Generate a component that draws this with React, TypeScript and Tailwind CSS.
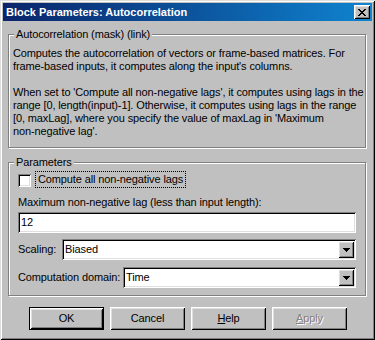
import React from "react";

const raised =
  "shadow-[inset_1px_1px_0_#fff,inset_-1px_-1px_0_#000,inset_2px_2px_0_#dfdfdf,inset_-2px_-2px_0_#808080]";
const sunken =
  "shadow-[inset_1px_1px_0_#808080,inset_-1px_-1px_0_#fff,inset_2px_2px_0_#000,inset_-2px_-2px_0_#dfdfdf]";

function CloseGlyph() {
  const rows = ["XX....XX", ".XX..XX.", "..XXXX..", "...XX...", "..XXXX..", ".XX..XX.", "XX....XX"];
  const rects: React.ReactNode[] = [];
  rows.forEach((r, y) =>
    r.split("").forEach((c, x) => {
      if (c === "X") rects.push(<rect key={`${x}-${y}`} x={x} y={y} width={1} height={1} fill="#000" />);
    })
  );
  return (
    <svg width="8" height="7" viewBox="0 0 8 7" shapeRendering="crispEdges">
      {rects}
    </svg>
  );
}

function Arrow() {
  return (
    <svg width="7" height="4" viewBox="0 0 7 4" shapeRendering="crispEdges">
      <rect x="0" y="0" width="7" height="1" fill="#000" />
      <rect x="1" y="1" width="5" height="1" fill="#000" />
      <rect x="2" y="2" width="3" height="1" fill="#000" />
      <rect x="3" y="3" width="1" height="1" fill="#000" />
    </svg>
  );
}

function Combo({ value, width }: { value: string; width: string }) {
  return (
    <div className={`${width} h-[21px] bg-white ${sunken} p-[2px] flex items-stretch`}>
      <div className="flex-1 pl-[1px] flex items-center leading-[13px]">{value}</div>
      <div className={`w-[16px] bg-[#c0c0c0] ${raised} flex items-center justify-center`}>
        <Arrow />
      </div>
    </div>
  );
}

function Btn({ children, def, className = "" }: { children: React.ReactNode; def?: boolean; className?: string }) {
  const inner = (
    <div className={`w-full h-full bg-[#c0c0c0] ${raised} flex items-center justify-center leading-[13px] ${className}`}>
      {children}
    </div>
  );
  return def ? (
    <div className="w-[75px] h-[23px] border border-black">{inner}</div>
  ) : (
    <div className="w-[75px] h-[23px]">{inner}</div>
  );
}

export default function App() {
  return (
    <div className="w-[375px] h-[340px] bg-[#c0c0c0] p-[3px] shadow-[inset_1px_1px_0_#dfdfdf,inset_-1px_-1px_0_#000,inset_2px_2px_0_#fff,inset_-2px_-2px_0_#808080] text-[11px] tracking-[-0.12px] text-black font-['Liberation_Sans',Arial,sans-serif] flex flex-col">
      {/* Title bar */}
      <div className="h-[18px] flex items-center justify-between bg-linear-to-r from-[#0a246a] to-[#1084d0] pl-[3px] pr-[2px]">
        <span className="text-white font-bold text-[11px] tracking-normal leading-[13px] whitespace-nowrap">
          Block Parameters: Autocorrelation
        </span>
        <div className={`w-[16px] h-[14px] bg-[#c0c0c0] ${raised} flex items-center justify-center`}>
          <CloseGlyph />
        </div>
      </div>

      {/* Group 1 */}
      <div className="relative ml-[5px] mt-[13px] w-[358px] h-[114px] shrink-0 border border-[#808080] shadow-[inset_1px_1px_0_#fff,1px_1px_0_#fff] pl-[4px] pt-[12px] leading-[13px] whitespace-nowrap">
        <span className="absolute left-[5px] top-[-7px] bg-[#c0c0c0] px-[2px] leading-[13px]">
          Autocorrelation (mask) (link)
        </span>
        <div>Computes the autocorrelation of vectors or frame-based matrices. For</div>
        <div>frame-based inputs, it computes along the input's columns.</div>
        <div className="h-[13px]" />
        <div>When set to 'Compute all non-negative lags', it computes using lags in the</div>
        <div>range [0, length(input)-1]. Otherwise, it computes using lags in the range</div>
        <div>[0, maxLag], where you specify the value of maxLag in 'Maximum</div>
        <div>non-negative lag'.</div>
      </div>

      {/* Group 2 */}
      <div className="relative ml-[5px] mt-[14px] w-[358px] h-[134px] shrink-0 border border-[#808080] shadow-[inset_1px_1px_0_#fff,1px_1px_0_#fff] pl-[9px] flex flex-col leading-[13px] whitespace-nowrap">
        <span className="absolute left-[5px] top-[-7px] bg-[#c0c0c0] px-[2px] leading-[13px]">Parameters</span>

        <div className="mt-[8px] h-[17px] flex items-start">
          <div className={`mt-[3px] w-[13px] h-[13px] bg-white ${sunken}`} />
          <div className="ml-[4px] h-[17px] px-[2px] border border-dotted border-black flex items-center">
            Compute all non-negative lags
          </div>
        </div>

        <div className="mt-[8px]">Maximum non-negative lag (less than input length):</div>

        <div className={`mt-[3px] w-[338px] h-[21px] bg-white ${sunken} pl-[3px] flex items-center`}>12</div>

        <div className="mt-[6px] flex items-center">
          <div className="w-[44px]">Scaling:</div>
          <Combo value="Biased" width="w-[294px]" />
        </div>

        <div className="mt-[7px] flex items-center">
          <div className="w-[105px]">Computation domain:</div>
          <Combo value="Time" width="w-[233px]" />
        </div>
      </div>

      {/* Buttons */}
      <div className="mt-[11px] ml-[26px] flex gap-[6px]">
        <Btn def>OK</Btn>
        <Btn>Cancel</Btn>
        <Btn>
          <span>
            <u>H</u>elp
          </span>
        </Btn>
        <Btn className="text-[#808080] [text-shadow:1px_1px_0_#fff]">
          <span>
            <u>A</u>pply
          </span>
        </Btn>
      </div>
    </div>
  );
}
